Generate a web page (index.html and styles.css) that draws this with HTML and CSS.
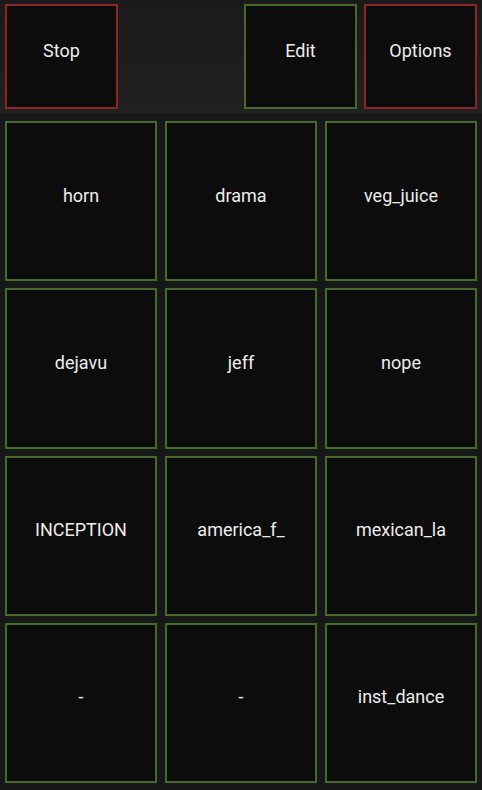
FILE: index.html
```html
<!DOCTYPE html>
<html>
<head>
  <title>Soundboard</title>
  <link rel="stylesheet" href="styles.css">
</head>
<body>
  <div class="topbar">
    <button class="pad pad-red top-btn">Stop</button>
    <div class="spacer"></div>
    <button class="pad pad-green top-btn">Edit</button>
    <button class="pad pad-red top-btn">Options</button>
  </div>
  <div class="grid">
    <button class="pad pad-green">horn</button>
    <button class="pad pad-green">drama</button>
    <button class="pad pad-green">veg_juice</button>
    <button class="pad pad-green">dejavu</button>
    <button class="pad pad-green">jeff</button>
    <button class="pad pad-green">nope</button>
    <button class="pad pad-green">INCEPTION</button>
    <button class="pad pad-green">america_f_</button>
    <button class="pad pad-green">mexican_la</button>
    <button class="pad pad-green">-</button>
    <button class="pad pad-green">-</button>
    <button class="pad pad-green">inst_dance</button>
  </div>
</body>
</html>
```

FILE: styles.css
```css
html, body {
  margin: 0;
  height: 100%;
}

body {
  font-family: Roboto, "Noto Sans", sans-serif;
  background-color: #181818;
  display: flex;
  flex-direction: column;
}

.topbar {
  display: flex;
  gap: 7px;
  height: 105px;
  padding: 4px 5px 5px 5px;
  background: linear-gradient(to bottom, #1a1a1a, #202020);
}

.spacer {
  flex: 1;
}

.pad {
  background-color: #0c0c0c;
  color: #ececec;
  font-family: inherit;
  font-size: 18px;
  border: 2px solid #456e2a;
  margin: 0;
  padding: 0 0 12px 0;
  cursor: pointer;
}

.pad-green {
  border-color: #436a28;
}

.pad-red {
  border-color: #8a2626;
}

.top-btn {
  width: 113px;
}

.grid {
  flex: 1;
  display: grid;
  grid-template-columns: repeat(3, 1fr);
  grid-template-rows: repeat(4, 1fr);
  gap: 7px 8px;
  padding: 7px 5px;
  background-color: #181818;
}
```
